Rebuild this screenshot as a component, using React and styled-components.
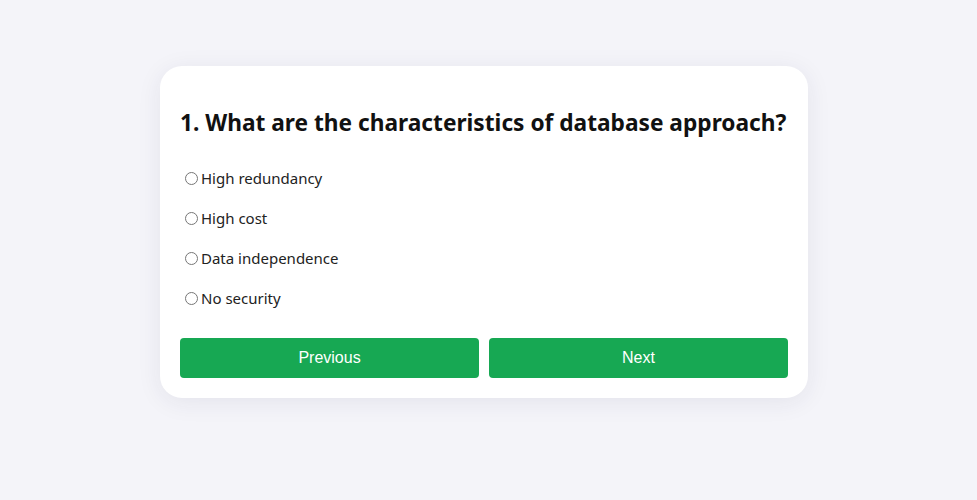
import React, { useState } from 'react';
import styled, { createGlobalStyle } from 'styled-components';

const GlobalStyle = createGlobalStyle`
  html, body {
    margin: 0;
    padding: 0;
    background: #f4f4f9;
  }
  body {
    font-family: "Noto Sans", "Open Sans", sans-serif;
  }
`;

const Page = styled.div`
  min-height: 500px;
  display: flex;
  justify-content: center;
  padding: 66px 9px 0 0;
  box-sizing: border-box;
`;

const Card = styled.div`
  width: 648px;
  box-sizing: border-box;
  padding: 20px;
  background: #ffffff;
  border-radius: 22px;
  box-shadow: 0 4px 24px rgba(40, 40, 80, 0.08);
  display: flex;
  flex-direction: column;
  align-self: flex-start;
`;

const Question = styled.h2`
  margin: 19px 0 17px;
  font-size: 22.7px;
  line-height: 36px;
  font-weight: 700;
  color: #111;
  white-space: nowrap;
`;

const Options = styled.div`
  display: flex;
  flex-direction: column;
`;

const Option = styled.label`
  height: 40px;
  display: flex;
  align-items: center;
  font-size: 15px;
  color: #222;
  cursor: pointer;

  input {
    margin: 0 3px 0 5px;
    width: 13px;
    height: 13px;
  }
`;

const Actions = styled.div`
  display: flex;
  gap: 10px;
  margin-top: 20px;
`;

const Button = styled.button`
  flex: 1;
  height: 40px;
  border: none;
  border-radius: 4px;
  background: #17a853;
  color: #fff;
  font-family: "Liberation Sans", Arial, sans-serif;
  font-size: 16px;
  cursor: pointer;
`;

const options = ['High redundancy', 'High cost', 'Data independence', 'No security'];

export default function App() {
  const [picked, setPicked] = useState(null);
  return (
    <>
      <GlobalStyle />
      <Page>
        <Card>
          <Question>1. What are the characteristics of database approach?</Question>
          <Options>
            {options.map((o) => (
              <Option key={o}>
                <input
                  type="radio"
                  name="answer"
                  checked={picked === o}
                  onChange={() => setPicked(o)}
                />
                {o}
              </Option>
            ))}
          </Options>
          <Actions>
            <Button>Previous</Button>
            <Button>Next</Button>
          </Actions>
        </Card>
      </Page>
    </>
  );
}
